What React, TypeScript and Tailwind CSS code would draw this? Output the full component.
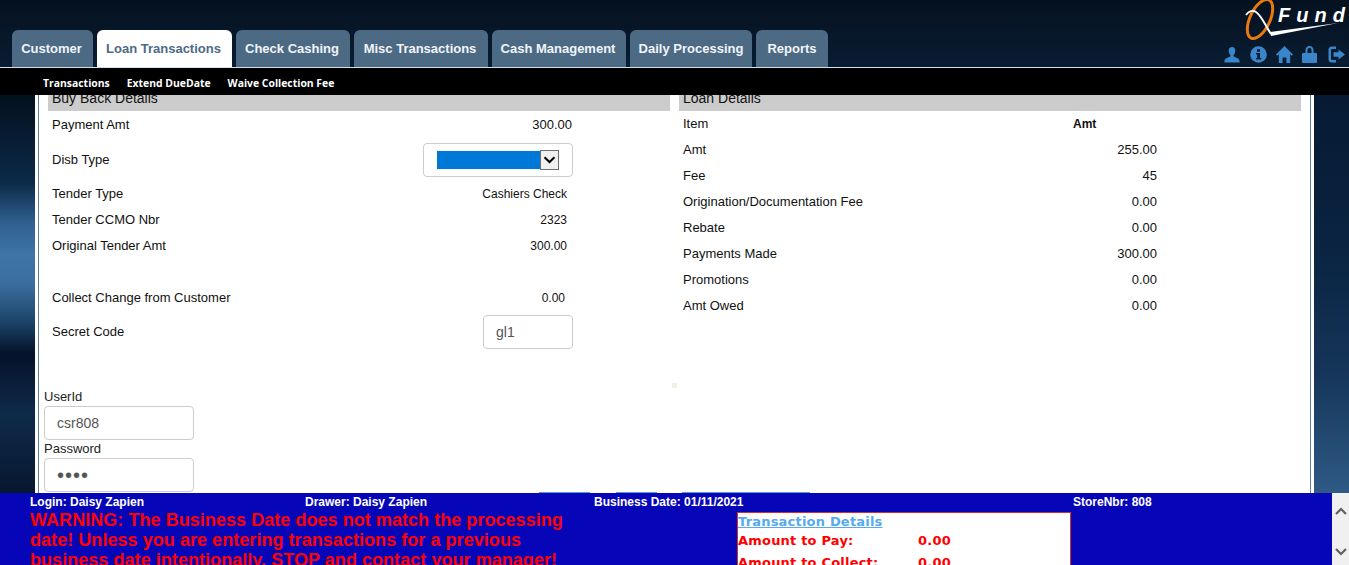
const ARIAL = "font-['Liberation_Sans',Arial,sans-serif]";

const TABS = [
  { label: "Customer", width: "w-[81px] pr-[2px]" },
  { label: "Loan Transactions", width: "w-[135px] pr-[2px]", active: true },
  { label: "Check Cashing", width: "w-[114px] pr-[2px]" },
  { label: "Misc Transactions", width: "w-[134px] pr-[2px]" },
  { label: "Cash Management", width: "w-[134px] pr-[2px]" },
  { label: "Daily Processing", width: "w-[122px]" },
  { label: "Reports", width: "w-[72px]" },
];

const LOAN_ROWS = [
  ["Amt", "255.00"],
  ["Fee", "45"],
  ["Origination/Documentation Fee", "0.00"],
  ["Rebate", "0.00"],
  ["Payments Made", "300.00"],
  ["Promotions", "0.00"],
  ["Amt Owed", "0.00"],
];

function Logo() {
  return (
    <div className="relative h-[42px] w-[105px]">
      <svg width="105" height="42" viewBox="0 0 105 42" className="absolute left-0 top-0">
        <ellipse cx="16" cy="19" rx="10" ry="21" transform="rotate(25 16 19)" fill="none" stroke="#e8790f" strokeWidth="3" />
        <path d="M2 15 C5 11 9 10 12 12 C18 16 22 27 27 34" fill="none" stroke="#fff" strokeWidth="2" />
        <path d="M26 32 L94 23 L27 36 z" fill="#fff" />
      </svg>
      <span className={`${ARIAL} absolute left-[34px] top-[2px] text-[20px] font-bold italic leading-[26px] tracking-[6px] text-white`}>
        Fund
      </span>
    </div>
  );
}

function HeaderIcons() {
  return (
    <div className="flex items-center gap-[9px] pr-[4px] text-[#3b86cb]">
      <svg width="16" height="16" viewBox="0 0 17 17" fill="currentColor" className="mr-[1px]" preserveAspectRatio="none">
        <path d="M8.5 0C6.2 0 5 1.8 5 4c0 2 .8 3.7 1.8 4.6v1.6C4.5 11.2 1 12.3.5 14.5V16.500h16v-2c-.5-2.200-4-3.300-6.300-4.300V8.600C11.200 7.700 12 6 12 4c0-2.200-1.200-4-3.500-4z" />
      </svg>
      <svg width="17" height="17" viewBox="0 0 17 17">
        <circle cx="8.500" cy="8.500" r="8.300" fill="currentColor" />
        <rect x="7" y="3.200" width="3" height="2.600" fill="#0a2038" />
        <path d="M6 7h4v5h1.200v1.600H6V12h1.200V8.600H6z" fill="#0a2038" />
      </svg>
      <svg width="17" height="17" viewBox="0 0 18 17" fill="currentColor" preserveAspectRatio="none">
        <path d="M9 0L0 8.500l1.300 1.300L3 8.300V17h4v-5.500h4V17h4V8.300l1.700 1.500L18 8.500z" />
      </svg>
      <svg width="15" height="17" viewBox="0 0 15 17" fill="currentColor" className="mr-[2px]">
        <path fillRule="evenodd" d="M7.500 0C5 0 3.500 1.700 3.500 4v3H1a1 1 0 0 0-1 1v8a1 1 0 0 0 1 1h13a1 1 0 0 0 1-1V8a1 1 0 0 0-1-1h-2.500V4c0-2.300-1.500-4-4-4zm0 2c1.300 0 2 .9 2 2.200V7h-4V4.200C5.500 2.900 6.200 2 7.500 2z" />
      </svg>
      <svg width="17" height="17" viewBox="0 0 17 17" fill="currentColor">
        <path d="M8 .5H4A3.500 3.500 0 0 0 .5 4v9A3.500 3.500 0 0 0 4 16.500h4V14H4.300A1.300 1.300 0 0 1 3 12.700V4.300A1.300 1.300 0 0 1 4.300 3H8z" />
        <path d="M10.500 3.500L17 8.500l-6.500 5V10.800H5.500V6.200h5z" />
      </svg>
    </div>
  );
}

function Header() {
  return (
    <header className="relative flex h-[68px] shrink-0 justify-between border-b border-[#cfe0ee] bg-gradient-to-b from-[#05111f] to-[#0a1d33] pl-[12px]">
      <nav className="mt-[30px] flex gap-[4px]">
        {TABS.map((tab) => (
          <div
            key={tab.label}
            className={`${tab.width} ${ARIAL} flex h-[37px] items-center justify-center rounded-t-[6px] text-[13px] font-bold ${
              tab.active ? "bg-white text-[#4d6a85]" : "bg-[#4d6a85] text-[#f0f4f8]"
            }`}
          >
            {tab.label}
          </div>
        ))}
      </nav>
      <div className="flex flex-col items-end">
        <Logo />
        <div className="mt-[4px]">
          <HeaderIcons />
        </div>
      </div>
    </header>
  );
}

function SubNav() {
  return (
    <div className="flex h-[27px] shrink-0 items-center gap-[17px] bg-black pl-[43px] pt-[5px] font-['Open_Sans',sans-serif] text-[10.400px] font-bold text-white">
      <span>Transactions</span>
      <span>Extend DueDate</span>
      <span>Waive Collection Fee</span>
    </div>
  );
}

function SectionTitle({ children }: { children: string }) {
  return (
    <div className="h-[26px] bg-[#cccccc] pl-[4px] pt-[5px] text-[14px] leading-[17px] text-[#111]">
      {children}
    </div>
  );
}

function LabeledValue({ label, value, pad }: { label: string; value: string; pad: string }) {
  return (
    <div className="flex h-[26px] items-center justify-between pl-[4px]">
      <span>{label}</span>
      <span className={`${pad} text-[12px]`}>{value}</span>
    </div>
  );
}

function BuyBackDetails() {
  return (
    <section className="w-[622px]">
      <SectionTitle>Buy Back Details</SectionTitle>
      <div className="pr-[97px]">
        <div className="flex h-[26px] items-center justify-between pl-[4px] pt-[1px]">
          <span>Payment Amt</span>
          <span className="pr-[1px]">300.00</span>
        </div>
        <div className="flex h-[44px] items-center justify-between pl-[4px] pt-[2px]">
          <span>Disb Type</span>
          <div className="flex h-[34px] w-[150px] items-center rounded-[4px] border border-[#cccccc] pl-[13px]">
            <div className="h-[18px] w-[103px] bg-[#0078d7]" />
            <div className="flex h-[20px] w-[19px] items-center justify-center border border-[#707070] bg-[#f0f0f0]">
              <svg width="13" height="8" viewBox="0 0 13 8" fill="none" stroke="#000" strokeWidth="2">
                <path d="M1.500 1.200L6.500 6l5-4.800" />
              </svg>
            </div>
          </div>
        </div>
        <LabeledValue label="Tender Type" value="Cashiers Check" pad="pr-[6px]" />
        <LabeledValue label="Tender CCMO Nbr" value="2323" pad="pr-[6px]" />
        <LabeledValue label="Original Tender Amt" value="300.00" pad="pr-[6px]" />
        <div className="mt-[26px] flex h-[26px] items-center justify-between pl-[4px]">
          <span>Collect Change from Customer</span>
          <span className="pr-[8px] text-[12px]">0.00</span>
        </div>
        <div className="mt-[4px] flex h-[34px] items-center justify-between pl-[4px]">
          <span>Secret Code</span>
          <div className="flex h-[34px] w-[90px] items-center rounded-[4px] border border-[#cccccc] pl-[12px] text-[14px] text-[#555]">
            gl1
          </div>
        </div>
      </div>
    </section>
  );
}

function LoanDetails() {
  return (
    <section className="w-[622px]">
      <SectionTitle>Loan Details</SectionTitle>
      <div className="mr-[144px] pl-[4px]">
        <div className="flex h-[26px] items-center">
          <span className="w-[390px]">Item</span>
          <span className="text-[12px] font-bold">Amt</span>
        </div>
        {LOAN_ROWS.map(([label, value]) => (
          <div key={label} className="flex h-[26px] items-center justify-between">
            <span>{label}</span>
            <span>{value}</span>
          </div>
        ))}
      </div>
    </section>
  );
}

function Credentials() {
  return (
    <div className="ml-[5px] mt-[39px] w-[150px] text-[13px] leading-[18px] text-[#222]">
      <div>UserId</div>
      <div className="flex h-[34px] items-center rounded-[4px] border border-[#cccccc] pl-[12px] text-[14px] text-[#555]">csr808</div>
      <div>Password</div>
      <div className="flex h-[34px] items-center rounded-[4px] border border-[#cccccc] pl-[12px] text-[20px] tracking-[1px] text-[#555]">
        ••••
      </div>
    </div>
  );
}

function Main() {
  return (
    <main className="flex min-h-0 flex-1 overflow-hidden">
      <div className="w-[35px] shrink-0 bg-[linear-gradient(to_bottom,#03101f_0%,#0c2a48_22%,#2f5f8f_32%,#3f74a8_40%,#3c6fa0_47%,#1d4468_57%,#04122a_65%,#0f2a4a_80%,#06182e_100%)]" />
      <div className="min-w-0 flex-1 bg-white px-[3px]">
        <div className={`${ARIAL} relative h-full overflow-hidden border-x border-[#5b7f9f] text-[13px] text-[#111]`}>
          <div className="-mt-[10px] flex gap-[9px] pl-[9px]">
            <BuyBackDetails />
            <LoanDetails />
          </div>
          <Credentials />
          <div className="absolute left-[633px] top-[288px] h-[5px] w-[5px] bg-[#eef2e0]" />
          <div className="absolute bottom-0 left-[500px] h-[1px] w-[51px] bg-[#4a9fd8]" />
          <div className="absolute bottom-0 left-[577px] h-[1px] w-[41px] bg-[#4a9fd8]" />
          <div className="absolute bottom-0 left-[643px] h-[1px] w-[128px] bg-[#4a9fd8]" />
        </div>
      </div>
      <div className="w-[35px] shrink-0 bg-[linear-gradient(to_bottom,#061a33_0%,#0a2442_40%,#15365a_70%,#2f5a85_100%)]" />
    </main>
  );
}

function TransactionBox() {
  return (
    <div className="mt-[2px] h-[80px] w-[334px] border border-[#d03030] bg-white pt-[1px] font-['DejaVu_Sans',sans-serif] text-[13px] font-bold tracking-[0.200px] text-[#ff0000]">
      <div className="leading-[16px] text-[#55aaf0] underline">Transaction Details</div>
      <div className="mt-[1px] flex h-[19px] items-center">
        <span className="w-[180px]">Amount to Pay:</span>
        <span>0.00</span>
      </div>
      <div className="mt-[3px] flex h-[19px] items-center">
        <span className="w-[180px]">Amount to Collect:</span>
        <span>0.00</span>
      </div>
    </div>
  );
}

function Footer() {
  return (
    <footer className={`${ARIAL} flex h-[72px] shrink-0 overflow-hidden bg-[#0606b8]`}>
      <div className="min-w-0 flex-1 pl-[30px]">
        <div className="flex h-[17px] items-center text-[12px] font-bold text-white">
          <span className="w-[275px]">Login: Daisy Zapien</span>
          <span className="w-[289px]">Drawer: Daisy Zapien</span>
          <span className="w-[479px]">Business Date: 01/11/2021</span>
          <span>StoreNbr: 808</span>
        </div>
        <div className="flex">
          <p className="w-[707px] pr-[160px] text-[18px] font-bold leading-[20px] tracking-[0.050px] text-[#ff0000]">
            WARNING: The Business Date does not match the processing date! Unless you are entering transactions for a previous business date intentionally, STOP and contact your manager!
          </p>
          <TransactionBox />
        </div>
      </div>
      <div className="flex w-[17px] shrink-0 flex-col items-center justify-between bg-[#f0f0f0] pb-[9px] pt-[14px] text-[#606060]">
        <svg width="12" height="8" viewBox="0 0 12 8" fill="none" stroke="currentColor" strokeWidth="2.200">
          <path d="M1 7l5-5 5 5" />
        </svg>
        <svg width="12" height="8" viewBox="0 0 12 8" fill="none" stroke="currentColor" strokeWidth="2.200">
          <path d="M1 1l5 5 5-5" />
        </svg>
      </div>
    </footer>
  );
}

export default function App() {
  return (
    <div className="flex h-screen flex-col overflow-hidden">
      <Header />
      <SubNav />
      <Main />
      <Footer />
    </div>
  );
}
